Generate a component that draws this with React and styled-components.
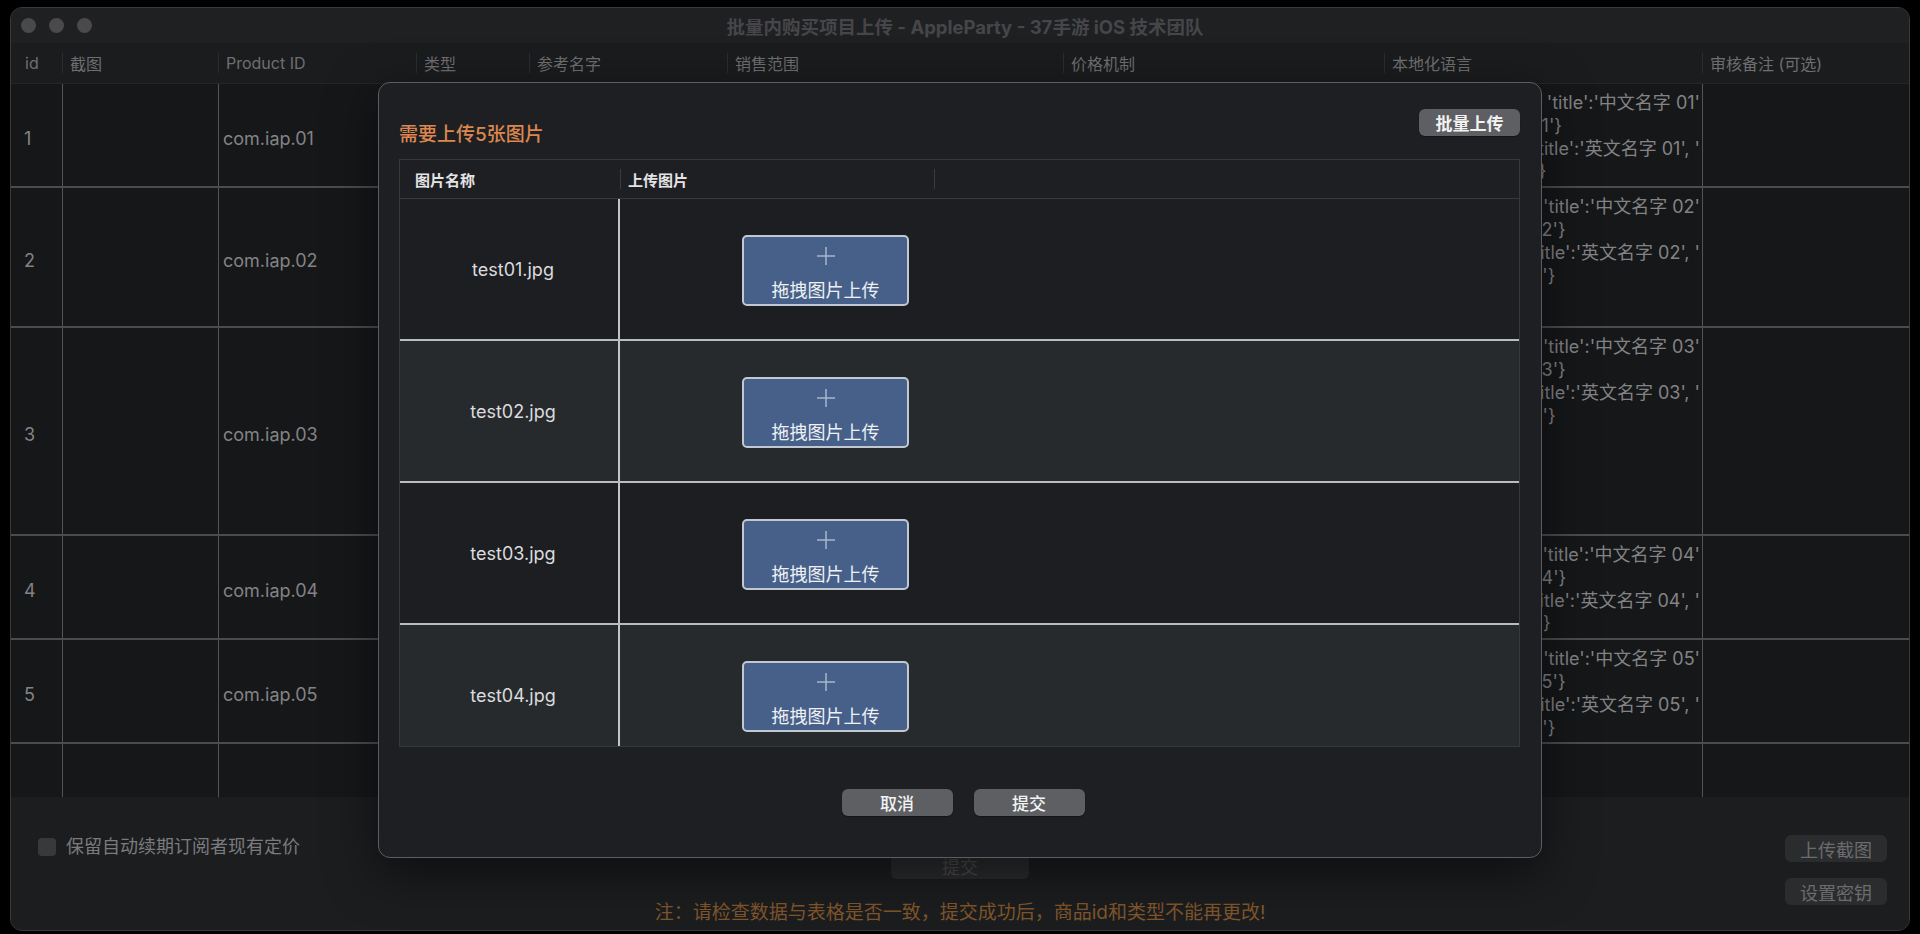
import React from 'react'
import styled, { createGlobalStyle } from 'styled-components'

const GlobalStyle = createGlobalStyle`
  html, body {
    margin: 0;
    padding: 0;
    background: #000;
  }
  body {
    font-family: Inter, "Noto Sans CJK SC", sans-serif;
  }
  * {
    box-sizing: border-box;
  }
`

const Screen = styled.div`
  position: relative;
  width: 1920px;
  height: 934px;
  padding: 7px 10px 3px 10px;
  background: #000;
  overflow: hidden;
`

const Window = styled.div`
  display: flex;
  flex-direction: column;
  height: 100%;
  background: #1c1d1f;
  border: 1px solid #3a3a3c;
  border-radius: 12px;
  overflow: hidden;
`

const TitleBar = styled.div`
  display: grid;
  grid-template-columns: 1fr auto 1fr;
  align-items: center;
  flex-shrink: 0;
  height: 35px;
  padding-left: 10px;
  background: #1f2022;
`

const Lights = styled.div`
  display: flex;
  gap: 13px;
`

const Light = styled.span`
  width: 15px;
  height: 15px;
  border-radius: 50%;
  background: #4a4a4c;
`

const WindowTitle = styled.div`
  font-size: 18.5px;
  font-weight: 700;
  color: #46464a;
`

const HeadRow = styled.div`
  display: flex;
  flex-shrink: 0;
  height: 41px;
  background: #1b1c1e;
  border-bottom: 1px solid #252628;
`

const HeadCell = styled.div`
  display: flex;
  align-items: center;
  width: ${p => p.$w ? `${p.$w}px` : 'auto'};
  flex: ${p => p.$w ? 'none' : '1'};
  padding-left: ${p => p.$first ? '14px' : '0'};
  font-size: 16px;
  color: #6f6f71;
  white-space: nowrap;
`

const HeadSep = styled.span`
  width: 1px;
  height: 20px;
  margin-right: 7px;
  background: #2c2d2f;
`

const TableBody = styled.div`
  flex: 1;
  overflow: hidden;
  background: #161719;
`

const cols = '51px 156px 198px 113px 198px 336px 321px 318px 1fr'

const Row = styled.div`
  display: grid;
  grid-template-columns: ${cols};
  height: ${p => p.$h}px;
  border-bottom: 2px solid #4c4c4e;
`

const Cell = styled.div`
  display: flex;
  align-items: center;
  padding-top: 6px;
  padding-left: ${p => p.$first ? '13px' : '4px'};
  border-left: ${p => p.$first ? 'none' : '1px solid #545456'};
  font-size: 18px;
  color: #838386;
  overflow: hidden;
`

const LocCell = styled.div`
  display: flex;
  flex-direction: column;
  padding: 7px 2px 0 6px;
  border-left: 1px solid #545456;
  font-size: 18px;
  line-height: 23px;
  color: #838386;
  overflow: hidden;
`

const LocLine = styled.div`
  display: flex;
  justify-content: ${p => p.$fill ? 'flex-end' : 'flex-start'};
  white-space: nowrap;
  overflow: hidden;
`

const BottomBar = styled.div`
  display: grid;
  grid-template-columns: 1fr auto 1fr;
  flex-shrink: 0;
  height: 133px;
  background: #1c1d1f;
`

const CheckRow = styled.label`
  display: flex;
  align-items: flex-start;
  gap: 10px;
  padding: 41px 0 0 27px;
  font-size: 18px;
  line-height: 18px;
  color: #7b7b7e;
`

const CheckBox = styled.span`
  width: 18px;
  height: 18px;
  border-radius: 4px;
  background: #38393b;
`

const CenterCol = styled.div`
  display: flex;
  flex-direction: column;
  align-items: center;
  padding-top: 56px;
`

const GhostButton = styled.div`
  display: flex;
  align-items: center;
  justify-content: center;
  width: ${p => p.$w}px;
  height: ${p => p.$h || 27}px;
  border-radius: 6px;
  background: #2b2c2e;
  font-size: 18px;
  color: ${p => p.$faint ? '#4b4b4e' : '#6c6c6f'};
`

const Note = styled.div`
  margin-top: 22px;
  font-size: 19px;
  line-height: 24px;
  color: #80562a;
`

const RightCol = styled.div`
  display: flex;
  flex-direction: column;
  align-items: flex-end;
  gap: 16px;
  padding: 38px 22px 0 0;
`

const Sheet = styled.div`
  position: absolute;
  left: 378px;
  top: 82px;
  width: 1164px;
  height: 776px;
  display: flex;
  flex-direction: column;
  background: #1e1f22;
  border: 1px solid #5c5d60;
  border-radius: 12px;
  box-shadow: 0 14px 50px rgba(0, 0, 0, 0.55);
`

const SheetHead = styled.div`
  display: flex;
  justify-content: space-between;
  align-items: flex-start;
  padding: 26px 21px 0 20px;
`

const SheetTitle = styled.div`
  margin-top: 14px;
  font-size: 19px;
  line-height: 24px;
  font-weight: 500;
  color: #dc874f;
`

const SolidButton = styled.button`
  display: flex;
  align-items: center;
  justify-content: center;
  width: ${p => p.$w}px;
  height: 27px;
  padding: 0;
  border: none;
  border-radius: 6px;
  background: #5e5f62;
  box-shadow: 0 1px 1px rgba(0, 0, 0, 0.35);
  font-family: inherit;
  font-size: 17px;
  font-weight: ${p => p.$bold ? 700 : 500};
  color: #f2f2f2;
`

const UploadTable = styled.div`
  display: flex;
  flex-direction: column;
  height: 588px;
  margin: 12px 21px 0 20px;
  border: 1px solid #37383b;
  overflow: hidden;
`

const UHead = styled.div`
  display: flex;
  flex-shrink: 0;
  height: 39px;
  border-bottom: 1px solid #37383b;
`

const UHeadCell = styled.div`
  display: flex;
  align-items: center;
  width: ${p => p.$w ? `${p.$w}px` : 'auto'};
  flex: ${p => p.$w ? 'none' : '1'};
  padding-left: ${p => p.$first ? '15px' : '0'};
  font-size: 15px;
  font-weight: 700;
  color: #e4e4e6;
`

const USep = styled.span`
  width: 1px;
  height: 20px;
  margin-right: 7px;
  background: #3a3b3e;
`

const URow = styled.div`
  display: grid;
  grid-template-columns: 220px 1fr;
  flex-shrink: 0;
  height: 142px;
  background: ${p => p.$alt ? '#262a2c' : '#1d1e21'};
  border-bottom: 2px solid #bcbcbe;
`

const NameCell = styled.div`
  display: flex;
  align-items: center;
  justify-content: center;
  padding-left: 8px;
  border-right: 2px solid #c4c4c6;
  font-size: 18px;
  color: #dcdcde;
`

const DropCell = styled.div`
  display: flex;
  align-items: center;
  padding-left: 122px;
  padding-top: 3px;
`

const DropZone = styled.div`
  display: flex;
  flex-direction: column;
  align-items: center;
  gap: 13px;
  width: 167px;
  height: 71px;
  padding-top: 9px;
  background: #46608a;
  border: 2px solid #c2c8d1;
  border-radius: 5px;
`

const DropLabel = styled.span`
  font-size: 18px;
  line-height: 24px;
  color: #eef0f3;
`

const SheetFoot = styled.div`
  display: flex;
  justify-content: center;
  gap: 21px;
  margin-top: 42px;
  padding-left: 6px;
`

const PlusIcon = () => (
  <svg width="20" height="20" viewBox="0 0 20 20">
    <path d="M10 1v18M1 10h18" stroke="#a8b6ca" strokeWidth="1.5" fill="none" />
  </svg>
)

const headers = [
  { label: 'id', w: 51 },
  { label: '截图', w: 156 },
  { label: 'Product ID', w: 198 },
  { label: '类型', w: 113 },
  { label: '参考名字', w: 198 },
  { label: '销售范围', w: 336 },
  { label: '价格机制', w: 321 },
  { label: '本地化语言', w: 318 },
  { label: '审核备注 (可选)' },
]

const rows = [
  { id: '1', pid: 'com.iap.01', h: 104, n: '01', tail: '}' },
  { id: '2', pid: 'com.iap.02', h: 140, n: '02', tail: "'}" },
  { id: '3', pid: 'com.iap.03', h: 208, n: '03', tail: "'}" },
  { id: '4', pid: 'com.iap.04', h: 104, n: '04', tail: '}' },
  { id: '5', pid: 'com.iap.05', h: 104, n: '05', tail: "'}" },
  { id: '', pid: '', h: 104 },
]

const files = ['test01.jpg', 'test02.jpg', 'test03.jpg', 'test04.jpg', 'test05.jpg']

const App = () => {
  return (
    <Screen>
      <GlobalStyle />
      <Window>
        <TitleBar>
          <Lights>
            <Light />
            <Light />
            <Light />
          </Lights>
          <WindowTitle>批量内购买项目上传 - AppleParty - 37手游 iOS 技术团队</WindowTitle>
          <div />
        </TitleBar>

        <HeadRow>
          {headers.map((h, i) => (
            <HeadCell key={h.label} $w={h.w} $first={i === 0}>
              {i > 0 && <HeadSep />}
              {h.label}
            </HeadCell>
          ))}
        </HeadRow>

        <TableBody>
          {rows.map((r, i) => (
            <Row key={i} $h={r.h}>
              <Cell $first>{r.id}</Cell>
              <Cell />
              <Cell>{r.pid}</Cell>
              <Cell />
              <Cell />
              <Cell />
              <Cell />
              <LocCell>
                {r.n && (
                  <>
                    <LocLine $fill>{`{'zh-Hans':{'name':'${r.n}', 'title':'中文名字 ${r.n}'`}</LocLine>
                    <LocLine>{`'desc':'中文描述 ${r.n}'}`}</LocLine>
                    <LocLine $fill>{`'en-US':{'name':'${r.n}', 'title':'英文名字 ${r.n}', '`}</LocLine>
                    <LocLine>{`desc':'英文描述${r.n}${r.tail}`}</LocLine>
                  </>
                )}
              </LocCell>
              <Cell />
            </Row>
          ))}
        </TableBody>

        <BottomBar>
          <CheckRow>
            <CheckBox />
            保留自动续期订阅者现有定价
          </CheckRow>
          <CenterCol>
            <GhostButton $w={138} $h={26} $faint>提交</GhostButton>
            <Note>注：请检查数据与表格是否一致，提交成功后，商品id和类型不能再更改!</Note>
          </CenterCol>
          <RightCol>
            <GhostButton $w={102}>上传截图</GhostButton>
            <GhostButton $w={102}>设置密钥</GhostButton>
          </RightCol>
        </BottomBar>
      </Window>

      <Sheet>
        <SheetHead>
          <SheetTitle>需要上传5张图片</SheetTitle>
          <SolidButton $w={101} $bold>批量上传</SolidButton>
        </SheetHead>

        <UploadTable>
          <UHead>
            <UHeadCell $w={220} $first>图片名称</UHeadCell>
            <UHeadCell $w={314}>
              <USep />
              上传图片
            </UHeadCell>
            <UHeadCell>
              <USep />
            </UHeadCell>
          </UHead>
          {files.map((f, i) => (
            <URow key={f} $alt={i % 2 === 1}>
              <NameCell>{f}</NameCell>
              <DropCell>
                <DropZone>
                  <PlusIcon />
                  <DropLabel>拖拽图片上传</DropLabel>
                </DropZone>
              </DropCell>
            </URow>
          ))}
        </UploadTable>

        <SheetFoot>
          <SolidButton $w={111}>取消</SolidButton>
          <SolidButton $w={111}>提交</SolidButton>
        </SheetFoot>
      </Sheet>
    </Screen>
  )
}

export default App
